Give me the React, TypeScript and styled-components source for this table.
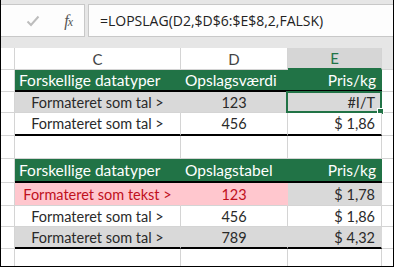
import styled, { createGlobalStyle, css } from "styled-components"

const GlobalStyle = createGlobalStyle`
  html, body {
    margin: 0;
    padding: 0;
    background: #fff;
  }
  * {
    box-sizing: border-box;
  }
`

const GREEN = "#217346"
const GRID = "#d4d4d4"

const Sheet = styled.div`
  width: 394px;
  height: 267px;
  overflow: hidden;
  background: #fff;
  border-left: 1px solid #000;
  border-right: 1px solid #000;
  border-bottom: 1px solid #000;
  font-family: "Lato", "Open Sans", sans-serif;
`

const FormulaBar = styled.div`
  display: flex;
  gap: 3px;
  height: 48px;
  padding: 4px 0 11px 0;
  background: #e6e6e6;
`

const ButtonBox = styled.div`
  width: 84px;
  display: flex;
  align-items: center;
  justify-content: flex-end;
  gap: 24px;
  padding-right: 12px;
  background: #fdfdfd;
  border: 1px solid #c8c8c8;
  border-left: none;
`

const FxLabel = styled.span`
  font-family: "Liberation Serif", serif;
  font-style: italic;
  font-size: 16px;
  color: #555;
  letter-spacing: -1px;

  & sub {
    font-size: 12px;
    vertical-align: baseline;
  }
`

const FormulaInput = styled.div`
  flex: 1;
  display: flex;
  align-items: center;
  padding-left: 11px;
  background: #fdfdfd;
  border: 1px solid #c8c8c8;
  border-right: none;
  font-family: "Open Sans", sans-serif;
  font-size: 14px;
  color: #222;
  white-space: nowrap;
  overflow: hidden;
`

const Grid = styled.div`
  display: grid;
  grid-template-columns: 14px 166px 107px 94px 1fr;
  grid-template-rows: 22px 22px 21px 23px 23px 24px 23px 21px 22px 22px;
`

const cellBase = css`
  display: flex;
  align-items: center;
  min-width: 0;
  white-space: nowrap;
  overflow: hidden;
  border-right: 1px solid ${GRID};
  border-bottom: 1px solid ${GRID};
`

const RowHead = styled.div`
  ${cellBase};
  background: #fff;
`

const ColHead = styled.div<{ $selected?: boolean }>`
  ${cellBase};
  justify-content: center;
  font-size: 15px;
  color: #444;
  background: #fff;
  ${p =>
    p.$selected &&
    css`
      background: #d6d6d6;
      color: ${GREEN};
      border-bottom: 2px solid ${GREEN};
    `}
`

const Corner = styled(ColHead)`
  background: #fff;
`

const Filler = styled(ColHead)`
  background: #e6e6e6;
  border-right: none;
`

const TableHead = styled.div<{ $align?: "left" | "right" }>`
  ${cellBase};
  background: ${GREEN};
  color: #fff;
  font-size: 15.5px;
  border-right: none;
  border-bottom: 2px solid #000;
  padding: 0 6px 0 4px;
  justify-content: ${p => (p.$align === "right" ? "flex-end" : "flex-start")};
`

type Tone = "gray" | "white" | "pink"

const toneStyle = {
  gray: css`
    background: #d9d9d9;
    color: #2a2a2a;
    border-right-color: #d9d9d9;
  `,
  white: css`
    background: #fff;
    color: #2a2a2a;
  `,
  pink: css`
    background: #ffc7ce;
    color: #c0101c;
    border-right-color: #ffc7ce;
  `,
}

const DataCell = styled.div<{ $tone: Tone; $align?: "center" | "right"; $last?: boolean }>`
  ${cellBase};
  position: relative;
  font-size: 14.5px;
  padding: 0 6px;
  justify-content: ${p => (p.$align === "right" ? "flex-end" : "center")};
  ${p => toneStyle[p.$tone]};
  ${p =>
    p.$last &&
    css`
      border-bottom: 2px solid #000;
    `}
`

const ActiveCell = styled(DataCell)`
  overflow: visible;
  &::before {
    content: "";
    position: absolute;
    left: -2px;
    top: -1px;
    right: -1px;
    bottom: -1px;
    border: 2px solid ${GREEN};
    pointer-events: none;
  }
  &::after {
    content: "";
    position: absolute;
    right: -3px;
    bottom: -3px;
    width: 5px;
    height: 5px;
    background: ${GREEN};
    border: 1px solid #fff;
  }
`

const Empty = styled.div`
  ${cellBase};
`

const EndCell = styled(Empty)`
  border-right: none;
`

type Row = { label: string; value: string; price: string; tones: [Tone, Tone, Tone] }

const firstTable: Row[] = [
  { label: "Formateret som tal >", value: "123", price: "#I/T", tones: ["gray", "gray", "gray"] },
  { label: "Formateret som tal >", value: "456", price: "$ 1,86", tones: ["white", "white", "white"] },
]

const secondTable: Row[] = [
  { label: "Formateret som tekst >", value: "123", price: "$ 1,78", tones: ["pink", "pink", "gray"] },
  { label: "Formateret som tal >", value: "456", price: "$ 1,86", tones: ["white", "white", "white"] },
  { label: "Formateret som tal >", value: "789", price: "$ 4,32", tones: ["gray", "gray", "gray"] },
]

function CheckIcon() {
  return (
    <svg width="14" height="12" viewBox="0 0 14 12">
      <polyline points="1.5,6.5 5,10 12.5,1.5" fill="none" stroke="#bdbdbd" strokeWidth="2" />
    </svg>
  )
}

function TableBlock({ valueTitle, rows, activeFirst }: { valueTitle: string; rows: Row[]; activeFirst?: boolean }) {
  return (
    <>
      <RowHead />
      <TableHead>Forskellige datatyper</TableHead>
      <TableHead>{valueTitle}</TableHead>
      <TableHead $align="right">Pris/kg</TableHead>
      <EndCell />
      {rows.map((r, i) => {
        const last = i === rows.length - 1
        const PriceCell = activeFirst && i === 0 ? ActiveCell : DataCell
        return [
          <RowHead key={`h${i}`} />,
          <DataCell key={`c${i}`} $tone={r.tones[0]} $last={last}>{r.label}</DataCell>,
          <DataCell key={`d${i}`} $tone={r.tones[1]} $last={last}>{r.value}</DataCell>,
          <PriceCell key={`e${i}`} $tone={r.tones[2]} $align="right" $last={last}>{r.price}</PriceCell>,
          <EndCell key={`f${i}`} />,
        ]
      })}
    </>
  )
}

export default function App() {
  return (
    <>
      <GlobalStyle />
      <Sheet>
        <FormulaBar>
          <ButtonBox>
            <CheckIcon />
            <FxLabel>f<sub>x</sub></FxLabel>
          </ButtonBox>
          <FormulaInput>=LOPSLAG(D2,$D$6:$E$8,2,FALSK)</FormulaInput>
        </FormulaBar>
        <Grid>
          <Corner />
          <ColHead>C</ColHead>
          <ColHead>D</ColHead>
          <ColHead $selected>E</ColHead>
          <Filler />

          <TableBlock valueTitle="Opslagsværdi" rows={firstTable} activeFirst />

          <RowHead />
          <Empty />
          <Empty />
          <Empty />
          <EndCell />

          <TableBlock valueTitle="Opslagstabel" rows={secondTable} />

          <RowHead />
          <Empty />
          <Empty />
          <Empty />
          <EndCell />
        </Grid>
      </Sheet>
    </>
  )
}
